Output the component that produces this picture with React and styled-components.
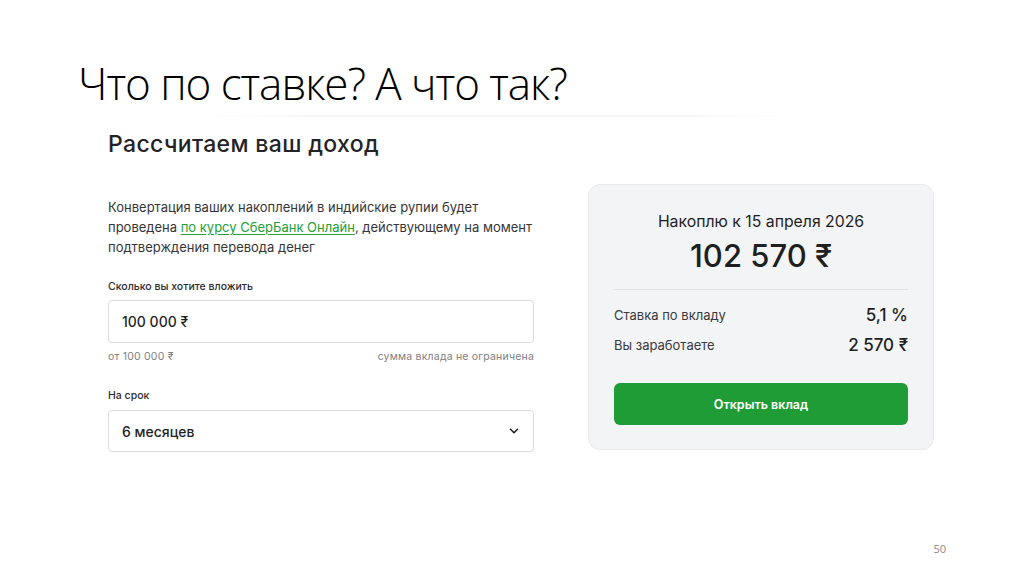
import React from "react";
import styled, { createGlobalStyle } from "styled-components";
import { ChevronDown } from "lucide-react";

const GlobalStyle = createGlobalStyle`
  html, body {
    margin: 0;
    padding: 0;
    background: #ffffff;
  }
  * {
    box-sizing: border-box;
  }
`;

const Slide = styled.div`
  width: 1024px;
  height: 574px;
  display: flex;
  flex-direction: column;
  padding: 0 78px 18px 78px;
  background: #fff;
  overflow: hidden;
`;

const Title = styled.h1`
  margin: 57px 0 0 0;
  font-family: "Open Sans", sans-serif;
  font-weight: 300;
  font-size: 44px;
  line-height: 52px;
  letter-spacing: -1.05px;
  color: #000;
  white-space: nowrap;
`;

// faint top edge of the pasted screenshot
const ShotEdge = styled.div`
  margin: 6px 0 0 120px;
  width: 600px;
  height: 2px;
  background: linear-gradient(
    90deg,
    rgba(0, 0, 0, 0) 0%,
    rgba(0, 0, 0, 0.035) 20%,
    rgba(0, 0, 0, 0.035) 80%,
    rgba(0, 0, 0, 0) 100%
  );
`;

const Calc = styled.div`
  display: flex;
  align-items: flex-start;
  gap: 54px;
  margin: 13px 0 0 30px;
  font-family: Inter, "Noto Sans", sans-serif;
  color: #1f1f22;
`;

const LeftCol = styled.div`
  width: 426px;
  display: flex;
  flex-direction: column;
`;

const Heading = styled.h2`
  margin: 0;
  font-size: 23px;
  line-height: 28px;
  font-weight: 500;
  letter-spacing: 0.35px;
  color: #232326;
`;

const Lead = styled.p`
  margin: 39px 0 0 0;
  font-size: 13px;
  line-height: 20px;
  color: #353538;
  white-space: nowrap;
`;

const Link = styled.a`
  color: #21a038;
  text-decoration: underline;
  text-underline-offset: 2px;
`;

const Label = styled.div`
  margin-top: ${(p) => p.$mt}px;
  font-size: 10.5px;
  line-height: 16px;
  font-weight: 500;
  color: #2b2b2e;
`;

const Field = styled.div`
  margin-top: ${(p) => p.$mt}px;
  height: ${(p) => p.$h}px;
  display: flex;
  align-items: center;
  justify-content: space-between;
  padding: 0 12px 0 13px;
  border: 1px solid #dcdcdc;
  border-radius: 4px;
  background: #fff;
  font-size: 14px;
  font-weight: 500;
  color: #1f1f22;
`;

const Hints = styled.div`
  margin-top: 7px;
  display: flex;
  justify-content: space-between;
  font-size: 10.5px;
  line-height: 14px;
  letter-spacing: 0.2px;
  color: #808083;
`;

const Card = styled.div`
  margin-top: 54px;
  width: 346px;
  height: 266px;
  display: flex;
  flex-direction: column;
  padding: 27px 25px 24px 25px;
  background: #f3f4f6;
  border: 1px solid #e9eaec;
  border-radius: 12px;
`;

const Caption = styled.div`
  text-align: center;
  font-size: 15.8px;
  line-height: 20px;
  color: #1f1f22;
`;

const Amount = styled.div`
  margin-top: 6px;
  text-align: center;
  font-size: 31px;
  line-height: 36px;
  font-weight: 500;
  color: #1f1f22;
`;

const Divider = styled.div`
  margin-top: 15px;
  height: 1px;
  background: #e2e3e5;
`;

const Rows = styled.div`
  margin-top: 10px;
  display: flex;
  flex-direction: column;
`;

const Row = styled.div`
  height: 30px;
  display: flex;
  align-items: center;
  justify-content: space-between;
`;

const RowLabel = styled.span`
  font-size: 13px;
  color: #3a3a3d;
`;

const RowValue = styled.span`
  font-size: 17px;
  font-weight: 500;
  color: #1f1f22;
`;

const Button = styled.button`
  margin-top: 23px;
  height: 42px;
  width: 100%;
  border: none;
  border-radius: 6px;
  background: #1f9c36;
  color: #fff;
  font-family: Inter, "Noto Sans", sans-serif;
  font-size: 12.5px;
  font-weight: 600;
`;

const PageNo = styled.div`
  margin-top: auto;
  align-self: flex-end;
  font-family: "Open Sans", sans-serif;
  font-size: 11px;
  line-height: 14px;
  color: #8a8a8a;
`;

export default function App() {
  return (
    <>
      <GlobalStyle />
      <Slide>
        <Title>Что по ставке? А что так?</Title>
        <ShotEdge />
        <Calc>
          <LeftCol>
            <Heading>Рассчитаем ваш доход</Heading>
            <Lead>
              Конвертация ваших накоплений в индийские рупии будет
              <br />
              проведена <Link>по курсу СберБанк Онлайн</Link>, действующему на момент
              <br />
              подтверждения перевода денег
            </Lead>
            <Label $mt={22}>Сколько вы хотите вложить</Label>
            <Field $mt={5} $h={43}>100 000 ₹</Field>
            <Hints>
              <span>от 100 000 ₹</span>
              <span>сумма вклада не ограничена</span>
            </Hints>
            <Label $mt={24}>На срок</Label>
            <Field $mt={6} $h={42}>
              6 месяцев
              <ChevronDown size={14} strokeWidth={2.6} color="#222" />
            </Field>
          </LeftCol>
          <Card>
            <Caption>Накоплю к 15 апреля 2026</Caption>
            <Amount>102 570 ₹</Amount>
            <Divider />
            <Rows>
              <Row>
                <RowLabel>Ставка по вкладу</RowLabel>
                <RowValue>5,1 %</RowValue>
              </Row>
              <Row>
                <RowLabel>Вы заработаете</RowLabel>
                <RowValue>2 570 ₹</RowValue>
              </Row>
            </Rows>
            <Button>Открыть вклад</Button>
          </Card>
        </Calc>
        <PageNo>50</PageNo>
      </Slide>
    </>
  );
}
